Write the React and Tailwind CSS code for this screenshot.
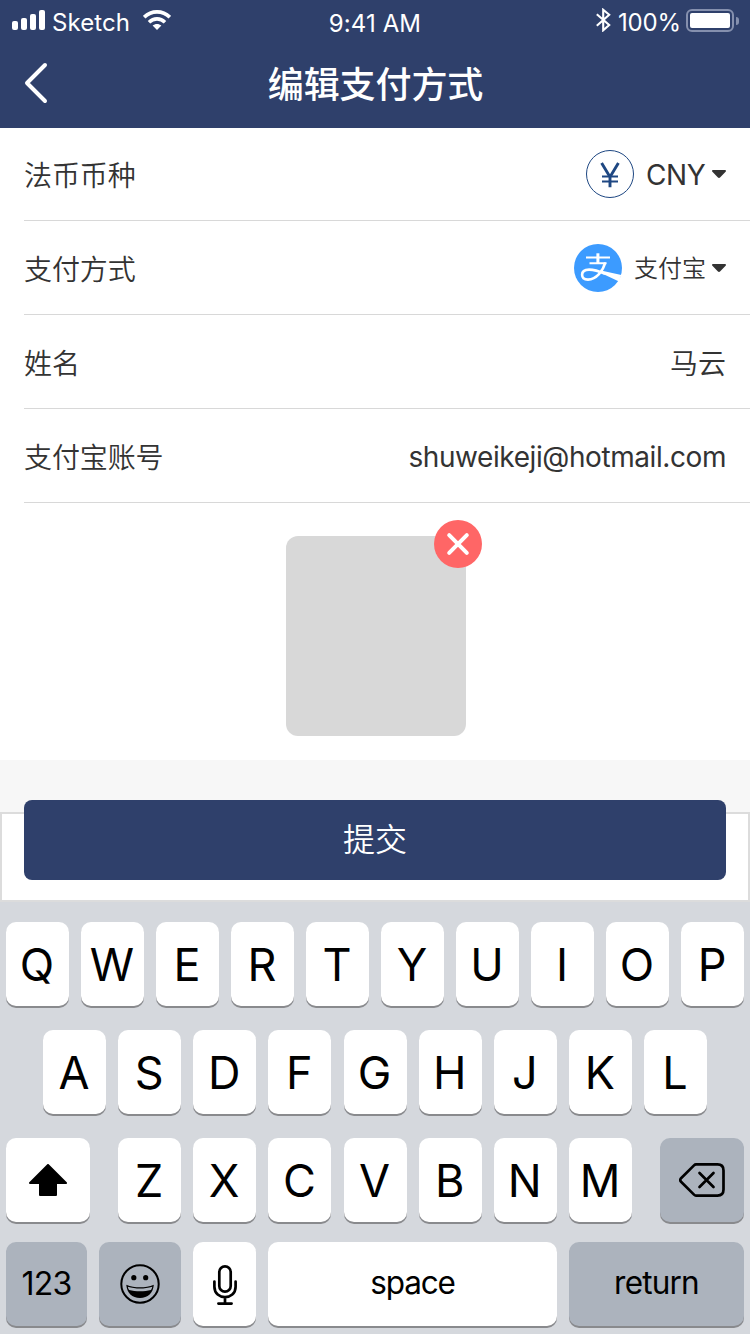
import React from "react";

function Key({ className = "w-[63px]", tone = "bg-white", children }) {
  return (
    <div
      className={`flex h-[84px] shrink-0 items-center justify-center rounded-[10px] text-black shadow-[0_2px_0_#898a8d] ${tone} ${className}`}
    >
      {children}
    </div>
  );
}

function LetterKey({ letter }) {
  return (
    <Key>
      <span className="pt-px pr-px text-[45px] leading-none">{letter}</span>
    </Key>
  );
}

function Letters({ value }) {
  return value.split("").map((letter) => <LetterKey key={letter} letter={letter} />);
}

function Row({ label, children }) {
  return (
    <div className="ml-6 flex h-[94px] items-center justify-between border-b border-[#d8d8d8] pt-[3px] pr-6 text-[28px] text-[#333333]">
      <span className="pt-px leading-[40px] tracking-[-0.1px]">{label}</span>
      <div className="flex items-center">{children}</div>
    </div>
  );
}

function Caret() {
  return (
    <svg className="mb-[3px] ml-1.5 h-2 w-3.5" viewBox="0 0 14 8" fill="#333333">
      <path d="M1.2 0h11.6c1.1 0 1.5.9.8 1.7L8.3 7.3c-.8.9-1.8.9-2.6 0L.4 1.7C-.3.9.1 0 1.2 0Z" />
    </svg>
  );
}

function StatusBar() {
  return (
    <div className="flex h-10 items-start justify-between text-[24px] leading-[28px] text-white">
      <div className="flex w-[250px] items-start pl-3">
        <div className="mt-2.5 flex h-5 items-end gap-[3px]">
          <i className="h-[9px] w-1.5 rounded-[2px] bg-white" />
          <i className="h-3 w-1.5 rounded-[2px] bg-white" />
          <i className="h-4 w-1.5 rounded-[2px] bg-white" />
          <i className="h-5 w-1.5 rounded-[2px] bg-white" />
        </div>
        <span className="mt-[9px] ml-[7px] w-[78px] tracking-[0.1px]">Sketch</span>
        <svg className="mt-2.5 ml-[13px] h-5 w-7" viewBox="0 0 28 20" fill="none" stroke="white">
          <path d="M1.2 7.2C8.4.1 19.6.1 26.8 7.2" strokeWidth="3.6" />
          <path d="M6 12.2c4.600-4.400 11.400-4.400 16 0" strokeWidth="3.6" />
          <path d="M9.600 15.600c2.500-2.300 6.300-2.300 8.800 0L14 20Z" fill="white" stroke="none" />
        </svg>
      </div>
      <span className="mt-[10px] tracking-[0.1px]">9:41 AM</span>
      <div className="flex w-[250px] items-start justify-end pr-[11px]">
        <svg className="mt-2 h-6 w-[15px]" viewBox="0 0 15 24" fill="none" stroke="white" strokeWidth="2.100">
          <path d="M.800 6.200 13.200 17 7.200 22.300V1.800l6 5L.800 17.800" />
        </svg>
        <span className="mt-[9px] ml-[7px] w-[62px] tracking-[-0.2px] whitespace-nowrap">100%</span>
        <div className="mt-[9px] ml-[6px] flex h-[23px] w-12 rounded-[6px] border-2 border-[#8590ae] p-0.5">
          <div className="h-[15px] w-10 rounded-[2px] bg-white" />
        </div>
        <div className="mt-[17px] ml-0.5 h-2 w-[3px] rounded-r-full bg-[#8590ae]" />
      </div>
    </div>
  );
}

export default function App() {
  return (
    <div className="h-[1334px] w-[750px] overflow-hidden bg-white font-['Inter','Noto_Sans_CJK_SC',sans-serif]">
      <header className="h-32 bg-[#2f406b]">
        <StatusBar />
        <div className="flex h-[88px] items-center px-6">
          <svg className="mb-0.5 h-[42px] w-6" viewBox="0 0 24 42" fill="none" stroke="white" strokeWidth="4" strokeLinecap="round" strokeLinejoin="round">
            <path d="M21 3 3 21l18 18" />
          </svg>
          <h1 className="flex-1 pt-0.5 pr-[23px] text-center text-[36px] leading-[50px] font-medium tracking-[-0.1px] text-white">编辑支付方式</h1>
        </div>
      </header>

      <main>
        <div className="-mt-px font-[350]">
          <Row label="法币币种">
            <svg className="mb-[3px] h-12 w-12" viewBox="0 0 48 48" fill="none" stroke="#1e4782">
              <circle cx="24" cy="24" r="23.500" />
              <path d="m15.600 13 8.400 14 8.400-14M24 26v11.300" strokeWidth="2.900" />
              <path d="M16 26.500h16M16 31.400h16" strokeWidth="2" />
            </svg>
            <span className="ml-3 w-[60px] font-normal tracking-[-0.4px]">CNY</span>
            <Caret />
          </Row>
          <Row label="支付方式">
            <svg className="mb-[3px] h-12 w-12" viewBox="0 0 48 48">
              <circle cx="24" cy="24" r="24" fill="#3c9bff" />
              <g fill="none" stroke="white">
                <path d="M12 13.400h24M15.500 19.300h17" strokeWidth="2" />
                <path d="M23.900 9.300V20" strokeWidth="3" />
                <path d="M31.200 18.500C29 27 22.500 35.600 14 35.600c-4.300 0-5.900-2.200-5.900-4.800 0-3.500 3-5.200 7-5.200 5 0 10 1.600 16 4.200" strokeWidth="2.600" />
              </g>
              <path d="M27 26.600 47.300 31 45 37.500 28 29.600Z" fill="white" />
            </svg>
            <span className="ml-3 text-[24px]">支付宝</span>
            <Caret />
          </Row>
          <Row label="姓名">
            <span className="pt-px">马云</span>
          </Row>
          <Row label="支付宝账号">
            <span className="font-normal tracking-[-0.42px]">shuweikeji@hotmail.com</span>
          </Row>
        </div>

        <div className="flex h-[257px] justify-center pt-[33px]">
          <div className="relative ml-0.5 h-[200px] w-[180px] rounded-[12px] bg-[#d8d8d8]">
            <button className="absolute -top-4 -right-4 flex h-12 w-12 items-center justify-center rounded-full bg-[#ff6666]">
              <svg className="h-6 w-6" viewBox="0 0 24 24" stroke="white" strokeWidth="4" strokeLinecap="round">
                <path d="m3.200 3.200 17.600 17.600M20.800 3.200 3.200 20.800" />
              </svg>
            </button>
          </div>
        </div>

        <div className="h-[52px] bg-[#f7f7f7]" />
        <div className="h-[90px] border-2 border-[#dcdcdc] bg-white px-[22px]">
          <button className="relative -mt-[14px] flex h-20 w-full items-center justify-center rounded-[8px] bg-[#2f406b] text-[32px] font-[350] text-white">
            提交
          </button>
        </div>
      </main>

      <section className="flex h-[432px] flex-col bg-[#d5d8dd] px-1.5 pt-5">
        <div className="flex gap-3">
          <Letters value="QWERTYUIOP" />
        </div>
        <div className="mt-6 flex gap-[12.125px] pl-[37px]">
          <Letters value="ASDFGHJKL" />
        </div>
        <div className="mt-6 flex justify-between">
          <Key className="w-[84px]">
            <svg className="h-8 w-[38px]" viewBox="0 0 38 32">
              <path d="M19 1 37 19H27v12H11V19H1Z" fill="black" stroke="black" strokeWidth="2" strokeLinejoin="round" />
            </svg>
          </Key>
          <div className="flex gap-[12.167px]">
            <Letters value="ZXCVBNM" />
          </div>
          <Key className="w-[84px]" tone="bg-[#acb3bd]">
            <svg className="h-[34px] w-[46px]" viewBox="0 0 46 34" fill="none" stroke="black" strokeWidth="2.700" strokeLinecap="round" strokeLinejoin="round">
              <path d="M17 1.400h21.500q6 0 6 6v19.200q0 6-6 6H17q-1 0-2-1L1.800 18.500q-1.200-1.500 0-3L15 2.400q1-1 2-1Z" />
              <path d="m20.500 10 14 14M34.500 10l-14 14" />
            </svg>
          </Key>
        </div>
        <div className="mt-5 flex gap-3 text-[32px] leading-[40px]">
          <Key className="w-[81px]" tone="bg-[#acb3bd]">
            <span className="tracking-[-0.7px]">123</span>
          </Key>
          <Key className="w-[82px]" tone="bg-[#acb3bd]">
            <svg className="mb-px h-10 w-10" viewBox="0 0 40 40">
              <circle cx="20" cy="20" r="18.700" fill="none" stroke="black" strokeWidth="2" />
              <circle cx="13.800" cy="13.700" r="2.600" />
              <circle cx="25.700" cy="13.700" r="2.600" />
              <path d="M6.300 20.700c8.500 3.500 19 3.500 27.500 0-.500 8-6 13.300-13.800 13.300S6.800 28.700 6.300 20.700Z" />
              <path d="M7.800 22.700c7.800 2.400 16.700 2.400 24.500 0-.300 1.500-.700 2.300-1.300 3.200-6.500 1.900-15.400 1.900-21.900 0-.700-1.100-1.100-2-1.300-3.200Z" fill="#acb3bd" />
            </svg>
          </Key>
          <Key>
            <svg className="mt-0.5 h-10 w-6" viewBox="0 0 24 40" fill="none" stroke="black" strokeWidth="2.700" strokeLinecap="round">
              <rect x="6.300" y="1.400" width="11.400" height="25.200" rx="5.700" />
              <path d="M1.400 16.500v5.200c0 13.800 21.200 13.800 21.200 0v-5.200M12 32v6.500M5.400 38.600h13.200" />
            </svg>
          </Key>
          <Key className="w-[289px]">
            <span className="pb-[3px] text-[31.5px] tracking-[-1.2px]">space</span>
          </Key>
          <Key className="w-[175px]" tone="bg-[#acb3bd]">
            <span className="pb-[3px] text-[31.5px] tracking-[-0.8px]">return</span>
          </Key>
        </div>
      </section>
    </div>
  );
}
